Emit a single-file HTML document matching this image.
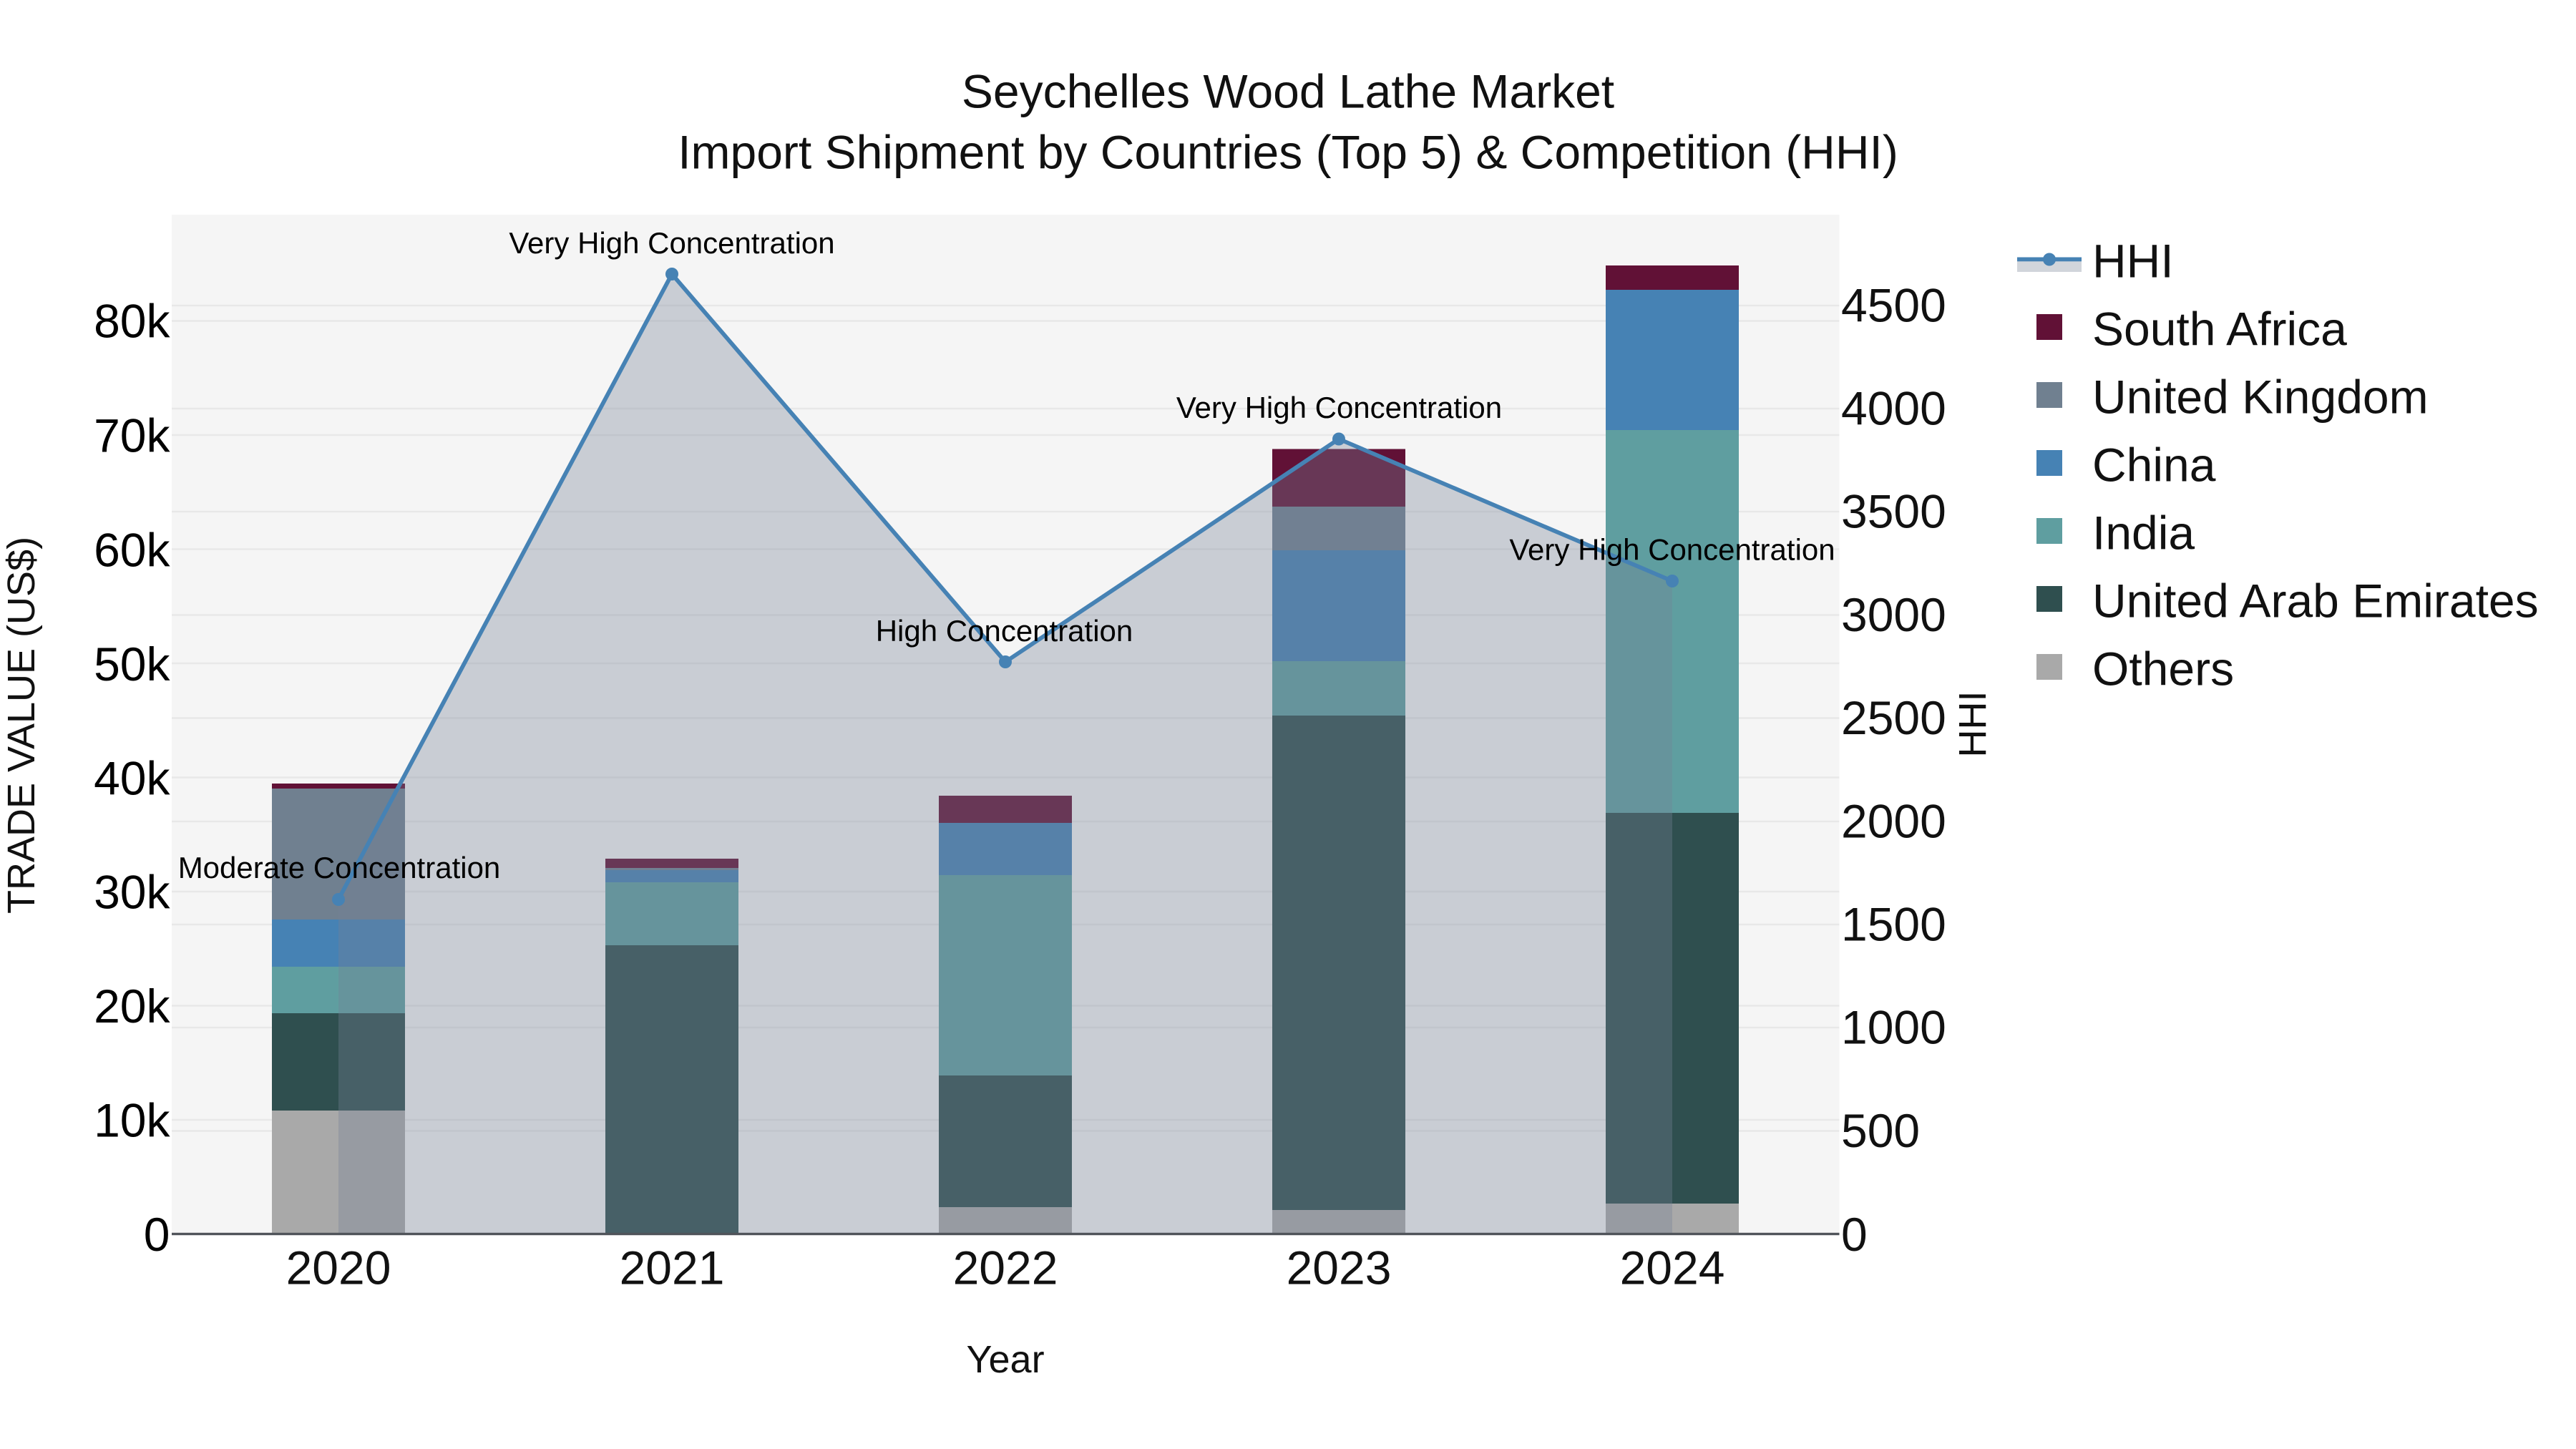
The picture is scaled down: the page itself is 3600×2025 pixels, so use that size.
<!DOCTYPE html>
<html><head><meta charset="utf-8"><title>Seychelles Wood Lathe Market</title>
<style>html,body{margin:0;padding:0;background:#fff}svg{display:block}text{font-family:"Liberation Sans",sans-serif;fill:#111}</style>
</head><body>
<svg xmlns="http://www.w3.org/2000/svg" width="3600" height="2025" viewBox="0 0 3600 2025">
<rect width="3600" height="2025" fill="#fff"/>
<rect x="240" y="300" width="2330.5" height="1424.5" fill="#f5f5f5"/>
<g stroke="#e8e8e8" stroke-width="2.6" fill="none">
<path d="M240 1565H2570.5M240 1405.5H2570.5M240 1246H2570.5M240 1086.5H2570.5M240 927H2570.5M240 767.5H2570.5M240 608H2570.5M240 448.5H2570.5"/>
<path d="M240 1580.5H2570.5M240 1436H2570.5M240 1292H2570.5M240 1148H2570.5M240 1003.5H2570.5M240 859.5H2570.5M240 715H2570.5M240 571H2570.5M240 427H2570.5"/>
</g>
<g shape-rendering="crispEdges">
<g>
<rect x="380" y="1552" width="186" height="172.5" fill="#a9a9a9"/>
<rect x="380" y="1416" width="186" height="136" fill="#2f4f4f"/>
<rect x="380" y="1351" width="186" height="65" fill="#5f9ea0"/>
<rect x="380" y="1285" width="186" height="66" fill="#4682b4"/>
<rect x="380" y="1102" width="186" height="183" fill="#708090"/>
<rect x="380" y="1095" width="186" height="7" fill="#611136"/>
</g>
<g>
<rect x="846" y="1321" width="186" height="403.5" fill="#2f4f4f"/>
<rect x="846" y="1233" width="186" height="88" fill="#5f9ea0"/>
<rect x="846" y="1216" width="186" height="17" fill="#4682b4"/>
<rect x="846" y="1213" width="186" height="3" fill="#708090"/>
<rect x="846" y="1200" width="186" height="13" fill="#611136"/>
</g>
<g>
<rect x="1312" y="1687" width="186" height="37.5" fill="#a9a9a9"/>
<rect x="1312" y="1503" width="186" height="184" fill="#2f4f4f"/>
<rect x="1312" y="1223" width="186" height="280" fill="#5f9ea0"/>
<rect x="1312" y="1150" width="186" height="73" fill="#4682b4"/>
<rect x="1312" y="1112" width="186" height="38" fill="#611136"/>
</g>
<g>
<rect x="1778" y="1691" width="186" height="33.5" fill="#a9a9a9"/>
<rect x="1778" y="1000" width="186" height="691" fill="#2f4f4f"/>
<rect x="1778" y="924" width="186" height="76" fill="#5f9ea0"/>
<rect x="1778" y="769" width="186" height="155" fill="#4682b4"/>
<rect x="1778" y="708" width="186" height="61" fill="#708090"/>
<rect x="1778" y="627.5" width="186" height="80.5" fill="#611136"/>
</g>
<g>
<rect x="2244" y="1682" width="186" height="42.5" fill="#a9a9a9"/>
<rect x="2244" y="1136" width="186" height="546" fill="#2f4f4f"/>
<rect x="2244" y="601" width="186" height="535" fill="#5f9ea0"/>
<rect x="2244" y="405" width="186" height="196" fill="#4682b4"/>
<rect x="2244" y="371" width="186" height="34" fill="#611136"/>
</g>
</g>
<path d="M473 1257L939 383L1405 925L1871 613.5L2337 812V1724.5H473Z" fill="rgba(118,130,150,.34)"/>
<path d="M473 1257L939 383L1405 925L1871 613.5L2337 812" fill="none" stroke="#4682b4" stroke-width="5.8" stroke-linejoin="round"/>
<g fill="#4682b4"><circle cx="473" cy="1257" r="9"/><circle cx="939" cy="383" r="9"/><circle cx="1405" cy="925" r="9"/><circle cx="1871" cy="613.5" r="9"/><circle cx="2337" cy="812" r="9"/></g>
<rect x="240" y="1722.8" width="2330.5" height="3.4" fill="#50545a"/>
<g font-size="42" text-anchor="middle" style="fill:#000">
<text x="474" y="1227" style="fill:#000">Moderate Concentration</text>
<text x="939" y="354" style="fill:#000">Very High Concentration</text>
<text x="1403.5" y="896" style="fill:#000">High Concentration</text>
<text x="1871.5" y="584" style="fill:#000">Very High Concentration</text>
<text x="2337" y="782.5" style="fill:#000">Very High Concentration</text>
</g>
<g font-size="66" text-anchor="middle">
<text x="1800" y="150.5">Seychelles Wood Lathe Market</text>
<text x="1800" y="235.5">Import Shipment by Countries (Top 5) &amp; Competition (HHI)</text>
</g>
<g font-size="66" text-anchor="end">
<text x="237.5" y="1748" style="fill:#000">0</text>
<text x="237.5" y="1588.5" style="fill:#000">10k</text>
<text x="237.5" y="1429" style="fill:#000">20k</text>
<text x="237.5" y="1269.5" style="fill:#000">30k</text>
<text x="237.5" y="1110.5" style="fill:#000">40k</text>
<text x="237.5" y="951" style="fill:#000">50k</text>
<text x="237.5" y="791.5" style="fill:#000">60k</text>
<text x="237.5" y="631.5" style="fill:#000">70k</text>
<text x="237.5" y="471.5" style="fill:#000">80k</text>
</g>
<g font-size="66">
<text x="2573" y="1748">0</text>
<text x="2573" y="1603">500</text>
<text x="2573" y="1458.5">1000</text>
<text x="2573" y="1314.5">1500</text>
<text x="2573" y="1170.5">2000</text>
<text x="2573" y="1026">2500</text>
<text x="2573" y="882">3000</text>
<text x="2573" y="737.5">3500</text>
<text x="2573" y="593.5">4000</text>
<text x="2573" y="449.5">4500</text>
</g>
<g font-size="66" text-anchor="middle">
<text x="473" y="1794.5">2020</text>
<text x="939" y="1794.5">2021</text>
<text x="1405" y="1794.5">2022</text>
<text x="1871" y="1794.5">2023</text>
<text x="2337" y="1794.5">2024</text>
</g>
<text x="1405" y="1918" font-size="54" text-anchor="middle">Year</text>
<text transform="translate(48 1013.5) rotate(-90)" font-size="54" text-anchor="middle">TRADE VALUE (US$)</text>
<text transform="translate(2775 1012) rotate(-90)" font-size="54" text-anchor="middle">HHI</text>
<rect x="2819" y="362" width="90" height="18" fill="#d1d5db"/>
<rect x="2819" y="359.5" width="90" height="5.8" fill="#4682b4"/>
<circle cx="2864" cy="362.5" r="9" fill="#4682b4"/>
<g shape-rendering="crispEdges">
<rect x="2846" y="439" width="36" height="36" fill="#611136"/>
<rect x="2846" y="534" width="36" height="36" fill="#708090"/>
<rect x="2846" y="629" width="36" height="36" fill="#4682b4"/>
<rect x="2846" y="724" width="36" height="36" fill="#5f9ea0"/>
<rect x="2846" y="819" width="36" height="36" fill="#2f4f4f"/>
<rect x="2846" y="914" width="36" height="36" fill="#a9a9a9"/>
</g>
<g font-size="66">
<text x="2924" y="387.5">HHI</text>
<text x="2924" y="482.5">South Africa</text>
<text x="2924" y="577.5">United Kingdom</text>
<text x="2924" y="672.5">China</text>
<text x="2924" y="767.5">India</text>
<text x="2924" y="862.5">United Arab Emirates</text>
<text x="2924" y="957.5">Others</text>
</g>
</svg>
</body></html>
